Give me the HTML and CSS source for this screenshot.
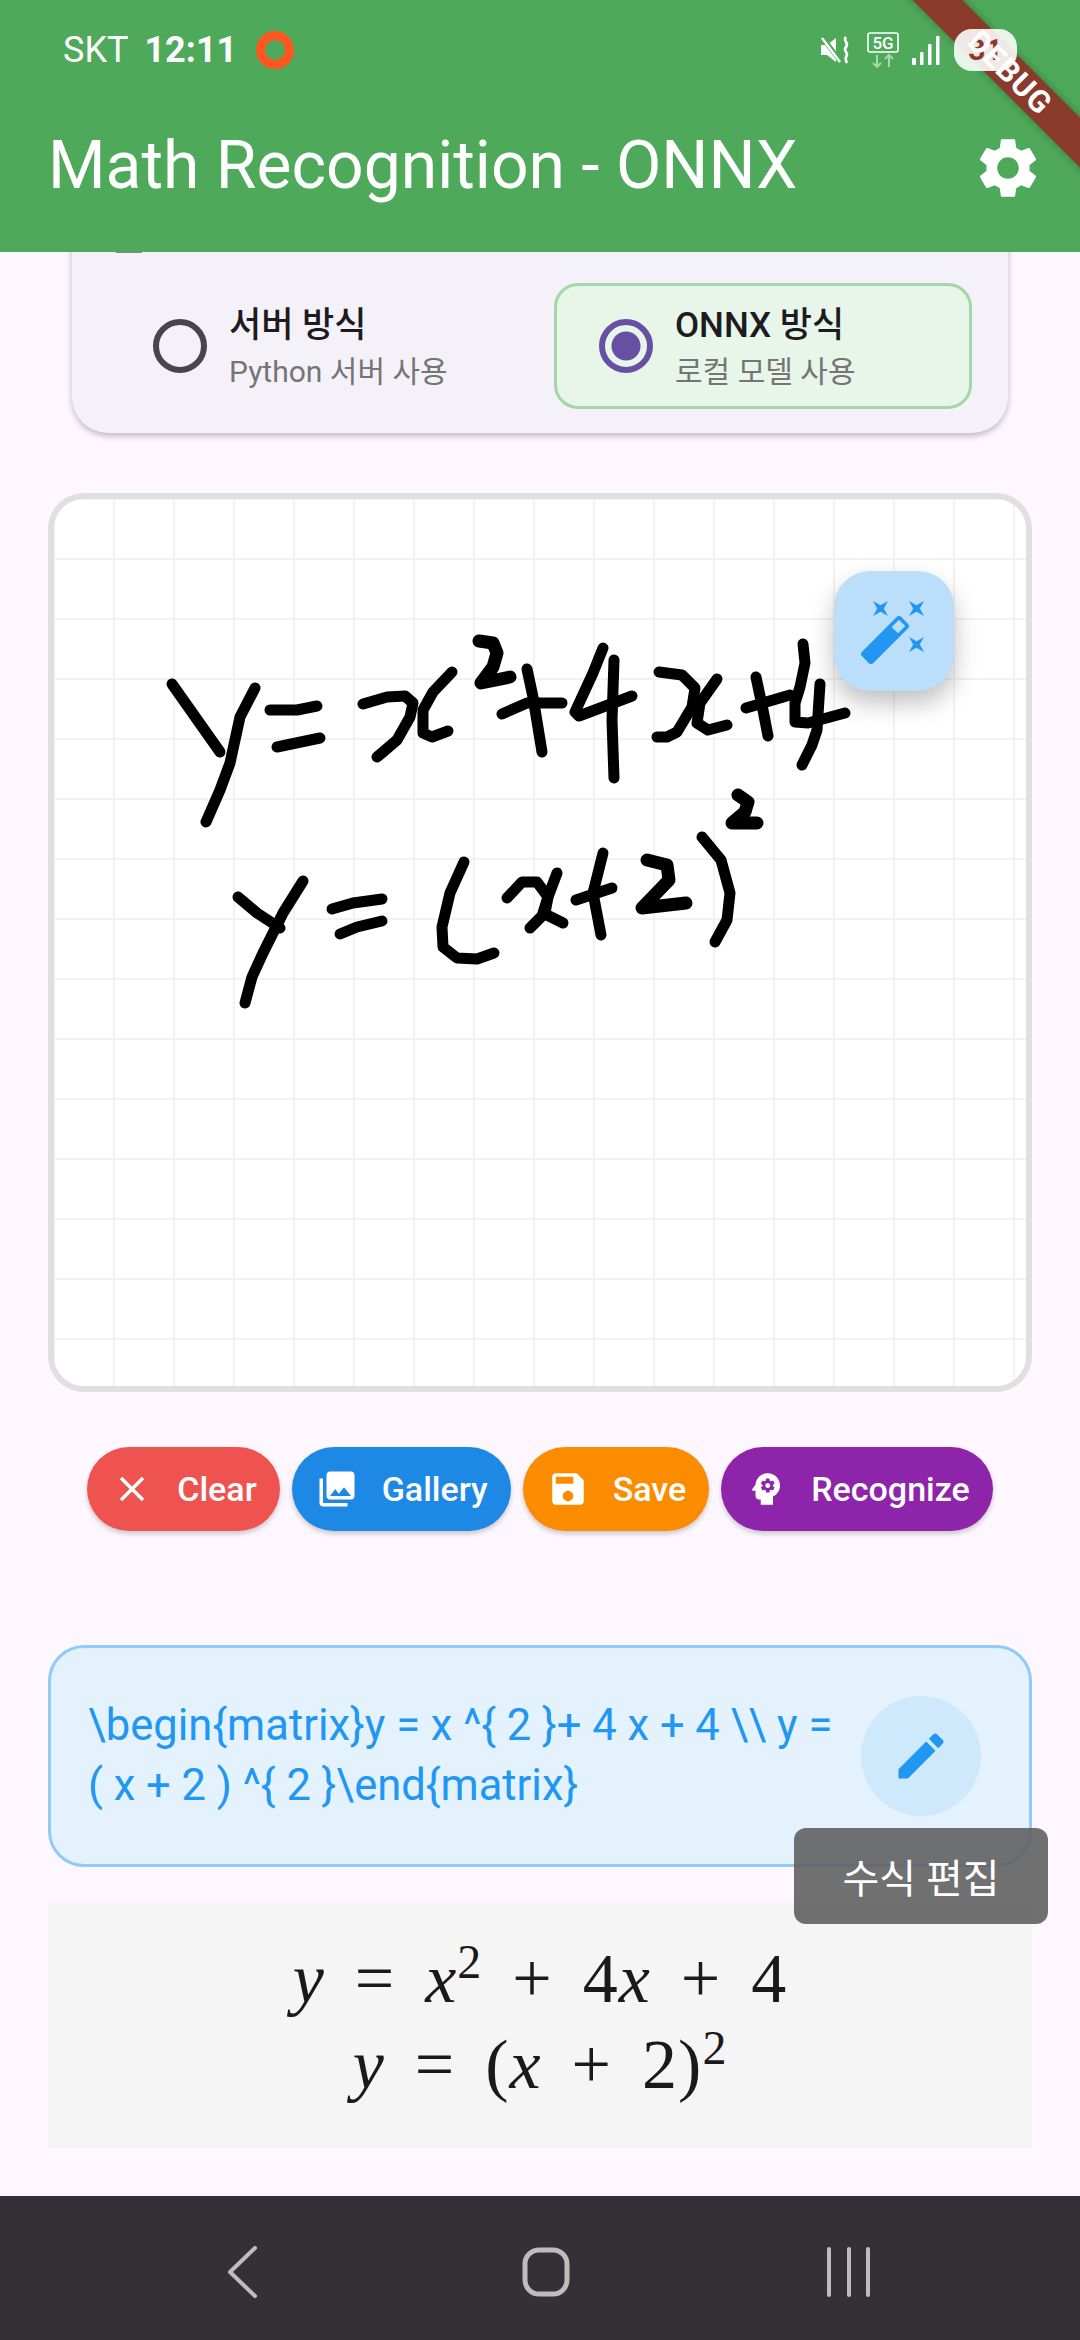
FILE: index.html
```html
<!DOCTYPE html>
<html lang="ko">
<head>
    <meta charset="UTF-8">
    <meta name="viewport" content="width=device-width, initial-scale=1.0">
    <title>Math Recognition - ONNX</title>
    <link rel="stylesheet" href="styles.css">
</head>
<body>
    <div class="screen">
        <header class="app-header">
            <div class="status-bar">
                <span class="carrier">SKT</span>
                <span class="clock">12:11</span>
                <span class="rec-dot"></span>
                <div class="status-icons">
                    <svg class="icon-mute" viewBox="0 0 30 28">
                        <path d="M0 9h6L15 2v24L6 19H0z" fill="#fff"/>
                        <path d="M1 1l19 25" stroke="#4fa95a" stroke-width="5"/>
                        <path d="M1 2l18 24" stroke="#fff" stroke-width="2.4"/>
                        <path d="M25 1c-4 4 4 6 0 10s4 6 0 10c-1 2 0 4 1 6" fill="none" stroke="#fff" stroke-width="2.6"/>
                    </svg>
                    <svg class="icon-5g" viewBox="0 0 32 36">
                        <rect x="1" y="1" width="30" height="19" rx="2" fill="none" stroke="#fff" stroke-width="1.6"/>
                        <text x="16" y="16.5" class="icon-5g-text">5G</text>
                        <path d="M10 23v12M6 31l4 4 4-4" fill="none" stroke="#a9d8ae" stroke-width="2"/>
                        <path d="M22 35V23M18 27l4-4 4 4" fill="none" stroke="#a9d8ae" stroke-width="2"/>
                    </svg>
                    <svg class="icon-signal" viewBox="0 0 28 29">
                        <rect x="0" y="22" width="4" height="7" rx="1" fill="#fff"/>
                        <rect x="8" y="16" width="3.5" height="13" rx="1" fill="#fff"/>
                        <rect x="16" y="8" width="3.5" height="21" rx="1" fill="#fff"/>
                        <rect x="24" y="0" width="3.5" height="29" rx="1" fill="#fff"/>
                    </svg>
                    <div class="battery">31</div>
                </div>
            </div>
            <div class="toolbar">
                <h1 class="app-title">Math Recognition - ONNX</h1>
                <svg class="icon-settings" viewBox="0 0 24 24"><path d="M19.14 12.94c.04-.3.06-.61.06-.94 0-.32-.02-.64-.07-.94l2.03-1.58c.18-.14.23-.41.12-.61l-1.92-3.32c-.12-.22-.37-.29-.59-.22l-2.39.96c-.5-.38-1.03-.7-1.62-.94l-.36-2.54c-.04-.24-.24-.41-.48-.41h-3.84c-.24 0-.43.17-.47.41l-.36 2.54c-.59.24-1.13.57-1.62.94l-2.39-.96c-.22-.08-.47 0-.59.22L2.74 8.87c-.12.21-.08.47.12.61l2.03 1.58c-.05.3-.09.63-.09.94s.02.64.07.94l-2.03 1.58c-.18.14-.23.41-.12.61l1.92 3.32c.12.22.37.29.59.22l2.39-.96c.5.38 1.03.7 1.62.94l.36 2.54c.05.24.24.41.48.41h3.84c.24 0 .44-.17.47-.41l.36-2.54c.59-.24 1.13-.56 1.62-.94l2.39.96c.22.08.47 0 .59-.22l1.92-3.32c.12-.22.07-.47-.12-.61l-2.01-1.58zM12 15.6c-1.98 0-3.6-1.62-3.6-3.6s1.62-3.6 3.6-3.6 3.6 1.62 3.6 3.6-1.62 3.6-3.6 3.6z"/></svg>
            </div>
        </header>

        <main class="content">
            <!-- Mode card, scrolled so its heading is hidden under the app bar -->
            <section class="mode-card">
                <div class="mode-title"><span class="mode-title-icon"></span>수행 방식</div>
                <div class="mode-options">
                    <div class="mode-option">
                        <span class="radio"></span>
                        <div>
                            <div class="option-name">서버 방식</div>
                            <div class="option-desc">Python 서버 사용</div>
                        </div>
                    </div>
                    <div class="mode-option selected">
                        <span class="radio"></span>
                        <div>
                            <div class="option-name">ONNX 방식</div>
                            <div class="option-desc">로컬 모델 사용</div>
                        </div>
                    </div>
                </div>
            </section>

            <!-- Drawing canvas -->
            <section class="canvas">
                <svg class="ink" viewBox="54 499 972 887">
                    <polyline points="172,684 220,752"/>
                    <polyline points="255,688 240,717 230,763 220,790 206,822"/>
                    <polyline points="270,710 297,710 317,706"/>
                    <polyline points="277,747 320,738"/>
                    <polyline points="363,704 387,697 405,696 413,703 410,717 397,740 383,752 377,757"/>
                    <polyline points="452,672 433,692 423,710 423,733 432,737 448,731"/>
                    <polyline class="thick" points="479,641 493,643 497,653 493,667 481,683 510,677"/>
                    <polyline points="502,714 527,703 562,703"/>
                    <polyline points="527,669 533,697 542,752"/>
                    <polyline points="603,648 593,673 575,712 579,716 632,696"/>
                    <polyline points="614,660 612,720 614,778"/>
                    <polyline points="659,672 682,675 695,688 692,707 677,732 667,737 657,737"/>
                    <polyline points="717,679 700,703 697,723 708,730 727,725"/>
                    <polyline points="756,677 763,710 768,736"/>
                    <polyline points="746,708 790,695"/>
                    <polyline points="803,644 805,663 800,687 795,703 795,722 808,723 845,713"/>
                    <polyline points="820,684 817,730 812,745 802,765"/>
                    <polyline points="238,897 257,913 280,928"/>
                    <polyline points="303,881 283,913 263,953 252,977 245,1003"/>
                    <polyline points="332,909 353,903 382,899"/>
                    <polyline points="340,934 357,927 382,921"/>
                    <polyline points="464,862 450,893 442,927 443,947 457,958 477,959 494,953"/>
                    <polyline points="507,898 522,882 537,882 548,897 545,913 530,928"/>
                    <polyline points="557,873 548,897 543,913 563,923"/>
                    <polyline points="576,900 612,888"/>
                    <polyline points="603,853 593,893 601,935"/>
                    <polyline class="thick" points="647,860 667,865 669,880 642,908 686,903"/>
                    <polyline points="702,837 721,860 730,893 727,920 715,942"/>
                    <polyline class="thick" points="738,795 748,802 745,812 732,823 757,823"/>
                </svg>
                <div class="wand-button">
                    <svg viewBox="0 0 24 24"><path d="M7.5 5.6L10 7 8.6 4.5 10 2 7.5 3.4 5 2l1.4 2.5L5 7zm12 9.8L17 14l1.4 2.5L17 19l2.5-1.4L22 19l-1.4-2.5L22 14zM22 2l-2.5 1.4L17 2l1.4 2.5L17 7l2.5-1.4L22 7l-1.4-2.5zm-7.63 5.29c-.39-.39-1.02-.39-1.41 0L1.29 18.96c-.39.39-.39 1.02 0 1.41l2.34 2.34c.39.39 1.02.39 1.41 0L16.7 11.05c.39-.39.39-1.02 0-1.41l-2.33-2.35zm-1.03 5.49l-2.12-2.12 2.44-2.44 2.12 2.12-2.44 2.44z"/></svg>
                </div>
            </section>

            <!-- Action buttons -->
            <div class="actions">
                <div class="action-btn btn-clear">
                    <svg viewBox="0 0 24 24"><path d="M19 6.41L17.59 5 12 10.59 6.41 5 5 6.41 10.59 12 5 17.59 6.41 19 12 13.41 17.59 19 19 17.59 13.41 12z"/></svg>
                    Clear
                </div>
                <div class="action-btn btn-gallery">
                    <svg viewBox="0 0 24 24"><path d="M22 16V4c0-1.1-.9-2-2-2H8c-1.1 0-2 .9-2 2v12c0 1.1.9 2 2 2h12c1.1 0 2-.9 2-2zm-11-4l2.03 2.71L16 11l4 5H8l3-4zM2 6v14c0 1.1.9 2 2 2h14v-2H4V6H2z"/></svg>
                    Gallery
                </div>
                <div class="action-btn btn-save">
                    <svg viewBox="0 0 24 24"><path d="M17 3H5c-1.11 0-2 .9-2 2v14c0 1.1.89 2 2 2h14c1.1 0 2-.9 2-2V7l-4-4zm-5 16c-1.66 0-3-1.34-3-3s1.34-3 3-3 3 1.34 3 3-1.34 3-3 3zm3-10H5V5h10v4z"/></svg>
                    Save
                </div>
                <div class="action-btn btn-recognize">
                    <svg viewBox="0 0 24 24"><path fill-rule="evenodd" d="M13 8.57c-.79 0-1.43.64-1.43 1.43s.64 1.43 1.43 1.43 1.43-.64 1.43-1.43-.64-1.43-1.43-1.43zM13 3C9.25 3 6.2 5.94 6.02 9.64L4.1 12.2c-.25.33-.01.8.4.8H6v3c0 1.1.9 2 2 2h1v3h7v-4.68c2.36-1.12 4-3.53 4-6.32 0-3.87-3.13-7-7-7zm3 7c0 .13-.01.26-.02.39l.83.66c.08.06.1.16.05.25l-.8 1.39c-.05.09-.16.12-.24.09l-.99-.4c-.21.16-.43.29-.67.39L14 13.83c-.01.1-.1.17-.2.17h-1.6c-.1 0-.18-.07-.2-.17l-.15-1.06c-.25-.1-.47-.23-.68-.39l-.99.4c-.09.03-.2 0-.25-.09l-.8-1.39c-.05-.08-.03-.19.05-.25l.84-.66c-.01-.13-.02-.26-.02-.39s.02-.27.04-.39l-.85-.66c-.08-.06-.1-.16-.05-.26l.8-1.38c.05-.09.15-.12.24-.09l1 .4c.2-.15.43-.29.67-.39L12 6.17c.02-.1.1-.17.2-.17h1.6c.1 0 .18.07.2.17l.15 1.06c.24.1.46.23.67.39l1-.4c.09-.03.2 0 .24.09l.8 1.38c.05.09.03.2-.05.26l-.85.66c.03.12.04.25.04.39z"/></svg>
                    Recognize
                </div>
            </div>

            <!-- Recognized LaTeX -->
            <section class="latex-card">
                <p class="latex-text">\begin{matrix}y = x ^{ 2 }+ 4 x + 4 \\ y = ( x + 2 ) ^{ 2 }\end{matrix}</p>
                <div class="edit-button">
                    <svg viewBox="0 0 24 24"><path d="M3 17.25V21h3.75L17.81 9.94l-3.75-3.75L3 17.25zM20.71 7.04c.39-.39.39-1.02 0-1.41l-2.34-2.34c-.39-.39-1.02-.39-1.41 0l-1.83 1.83 3.75 3.75 1.83-1.83z"/></svg>
                </div>
                <div class="tooltip">수식 편집</div>
            </section>

            <!-- Rendered formula -->
            <section class="formula">
                <div class="formula-line"><i>y</i><span class="op">=</span><i>x</i><sup>2</sup><span class="op">+</span>4<i>x</i><span class="op">+</span>4</div>
                <div class="formula-line"><i>y</i><span class="op">=</span>(<i>x</i><span class="op">+</span>2)<sup>2</sup></div>
            </section>
        </main>

        <nav class="nav-bar">
            <svg class="nav-back" viewBox="0 0 32 52"><path d="M29 2L4 26l25 24"/></svg>
            <svg class="nav-home" viewBox="0 0 48 50"><rect x="3" y="3" width="42" height="44" rx="14"/></svg>
            <svg class="nav-recent" viewBox="0 0 44 50"><path d="M2 2v46M22 2v46M41 2v46"/></svg>
        </nav>

        <!-- Flutter debug ribbon -->
        <div class="debug-band"></div>
        <div class="debug-label">DEBUG</div>
    </div>
</body>
</html>
```

FILE: styles.css
```css
/* Global Styles */
* {
    box-sizing: border-box;
}

body {
    margin: 0;
    font-family: Roboto, "Noto Sans CJK KR", sans-serif;
    background-color: #fef7ff;
}

.screen {
    position: relative;
    width: 1080px;
    height: 2340px;
    overflow: hidden;
    display: flex;
    flex-direction: column;
    background-color: #fef7ff;
}

/* Status bar + app bar */
.app-header {
    height: 252px;
    flex-shrink: 0;
    background-color: #4fa95a;
    color: #ffffff;
}

.status-bar {
    position: relative;
    z-index: 3;
    height: 84px;
    padding: 16px 63px 0 63px;
    display: flex;
    align-items: center;
    font-size: 36px;
}

.carrier {
    font-weight: 400;
    margin-right: 16px;
}

.clock {
    font-weight: 700;
    margin-right: 19px;
}

.rec-dot {
    width: 38px;
    height: 38px;
    border: 9px solid #ff5722;
    border-radius: 50%;
}

.status-icons {
    margin-left: auto;
    display: flex;
    align-items: center;
}

.icon-mute {
    width: 30px;
    height: 28px;
    margin-right: 16px;
}

.icon-5g {
    width: 32px;
    height: 36px;
    margin-right: 13px;
}

.icon-5g-text {
    font-size: 17px;
    font-weight: 500;
    fill: #ffffff;
    text-anchor: middle;
}

.icon-signal {
    width: 28px;
    height: 29px;
    margin-right: 14px;
}

.battery {
    width: 63px;
    height: 42px;
    border-radius: 18px;
    background-color: rgba(255, 255, 255, 0.88);
    color: #8a3a2a;
    font-size: 30px;
    font-weight: 700;
    line-height: 42px;
    text-align: center;
}

.toolbar {
    height: 168px;
    padding: 0 36px 6px 48px;
    display: flex;
    align-items: center;
    justify-content: space-between;
}

.app-title {
    margin: 0;
    font-size: 66px;
    font-weight: 400;
}

.icon-settings {
    width: 72px;
    height: 72px;
    margin-top: 6px;
    fill: #ffffff;
}

/* Scrolled content */
.content {
    flex: 1;
    min-height: 0;
    overflow: hidden;
}

.mode-card {
    margin: -60px 72px 0 72px;
    padding: 0 36px 24px 36px;
    background-color: #f5f1f9;
    border-radius: 36px;
    box-shadow: 0 3px 6px rgba(0, 0, 0, 0.25);
}

.mode-title {
    height: 91px;
    padding-bottom: 24px;
    display: flex;
    align-items: center;
    gap: 18px;
    font-size: 36px;
    font-weight: 500;
    color: #1d1b20;
}

.mode-title-icon {
    width: 26px;
    height: 26px;
    margin-left: 8px;
    margin-top: 28px;
    background-color: #888888;
}

.mode-options {
    display: grid;
    grid-template-columns: 1fr 1fr;
    gap: 28px;
}

.mode-option {
    height: 126px;
    padding-left: 45px;
    display: flex;
    align-items: center;
    gap: 22px;
    border: 3px solid transparent;
    border-radius: 24px;
}

.mode-option.selected {
    background-color: #e8f5e9;
    border-color: #a5d6a7;
}

.radio {
    width: 54px;
    height: 54px;
    flex-shrink: 0;
    margin-left: -3px;
    border: 6px solid #49454f;
    border-radius: 50%;
}

.selected .radio {
    border-color: #6750a4;
    background: radial-gradient(circle, #6750a4 14px, transparent 15px);
}

.option-name {
    margin-top: 6px;
    font-size: 35px;
    font-weight: 500;
    line-height: 46px;
    color: #1d1b20;
}

.option-desc {
    font-size: 30px;
    line-height: 46px;
    color: #757575;
}

/* Drawing canvas */
.canvas {
    position: relative;
    height: 899px;
    margin: 60px 48px 0 48px;
    border: 6px solid #e0e0e0;
    border-radius: 36px;
    background-color: #ffffff;
    background-image:
        linear-gradient(#f2f2f2 2px, transparent 2px),
        linear-gradient(90deg, #f2f2f2 2px, transparent 2px);
    background-size: 60px 60px;
    background-position: 59px 59px;
}

.ink {
    position: absolute;
    top: 0;
    left: 0;
    width: 972px;
    height: 887px;
}

.ink polyline {
    fill: none;
    stroke: #000000;
    stroke-width: 11;
    stroke-linecap: round;
    stroke-linejoin: round;
}

.ink .thick {
    stroke-width: 13;
}

.wand-button {
    position: absolute;
    top: 72px;
    right: 72px;
    width: 120px;
    height: 120px;
    display: flex;
    align-items: center;
    justify-content: center;
    border-radius: 36px;
    background-color: #bbdefb;
    box-shadow: 0 12px 24px rgba(0, 0, 0, 0.25);
}

.wand-button svg {
    width: 72px;
    height: 72px;
    fill: #2196f3;
}

/* Action buttons */
.actions {
    margin-top: 55px;
    display: flex;
    justify-content: center;
    gap: 12px;
}

.action-btn {
    height: 84px;
    padding: 0 23px 0 24px;
    display: flex;
    align-items: center;
    gap: 24px;
    border-radius: 42px;
    color: #ffffff;
    font-size: 34px;
    font-weight: 500;
    box-shadow: 0 3px 5px rgba(0, 0, 0, 0.2);
}

.action-btn svg {
    width: 42px;
    height: 42px;
    fill: #ffffff;
}

.btn-clear {
    background-color: #ef5350;
}

.btn-gallery {
    background-color: #1e88e5;
}

.btn-save {
    background-color: #fb8c00;
}

.btn-recognize {
    background-color: #8e24aa;
}

/* LaTeX card */
.latex-card {
    position: relative;
    z-index: 2;
    height: 222px;
    margin: 114px 48px 0 48px;
    padding: 0 48px 0 37px;
    display: flex;
    align-items: center;
    gap: 12px;
    background-color: #e3f2fd;
    border: 3px solid #90caf9;
    border-radius: 36px;
}

.latex-text {
    flex: 1;
    margin: 0;
    font-size: 43.5px;
    line-height: 60px;
    color: #2196f3;
}

.edit-button {
    width: 120px;
    height: 120px;
    flex-shrink: 0;
    display: flex;
    align-items: center;
    justify-content: center;
    border-radius: 50%;
    background-color: rgba(33, 150, 243, 0.1);
}

.edit-button svg {
    width: 60px;
    height: 60px;
    fill: #2196f3;
}

.tooltip {
    position: absolute;
    top: 180px;
    right: -19px;
    width: 254px;
    height: 96px;
    display: flex;
    align-items: center;
    justify-content: center;
    border-radius: 12px;
    background-color: rgba(97, 97, 97, 0.9);
    color: #ffffff;
    font-size: 40px;
}

/* Rendered formula */
.formula {
    height: 245px;
    margin: 36px 48px 0 48px;
    padding-top: 33px;
    background-color: #f5f5f5;
    font-family: "Liberation Serif", serif;
    font-size: 70px;
    letter-spacing: 1px;
    color: #1a1a1a;
    text-align: center;
}

.formula-line {
    height: 86px;
    line-height: 86px;
}

.formula sup {
    font-size: 48px;
    line-height: 0;
}

.formula .op {
    margin: 0 30px;
}

/* Navigation bar */
.nav-bar {
    height: 144px;
    flex-shrink: 0;
    padding: 8px 0 0 16px;
    display: flex;
    align-items: center;
    justify-content: center;
    background-color: #333135;
}

.nav-bar svg {
    fill: none;
    stroke: #bdbdbd;
    stroke-width: 4;
    stroke-linecap: round;
    stroke-linejoin: round;
}

.nav-back {
    width: 32px;
    height: 52px;
}

.nav-home {
    width: 48px;
    height: 50px;
    margin: 0 257px 0 264px;
}

.nav-recent {
    width: 44px;
    height: 50px;
}

.nav-home rect {
    stroke-width: 5;
}

/* Debug ribbon */
.debug-band {
    position: absolute;
    z-index: 2;
    top: 55px;
    left: 810px;
    width: 400px;
    height: 35px;
    background-color: #8a3a2a;
    box-shadow: 0 0 8px rgba(0, 0, 0, 0.3);
    transform: rotate(45deg);
}

.debug-label {
    position: absolute;
    z-index: 4;
    top: 55px;
    left: 810px;
    width: 400px;
    height: 35px;
    line-height: 35px;
    text-align: center;
    color: #ffffff;
    font-size: 31px;
    font-weight: 700;
    letter-spacing: 1px;
    transform: rotate(45deg);
}
```
